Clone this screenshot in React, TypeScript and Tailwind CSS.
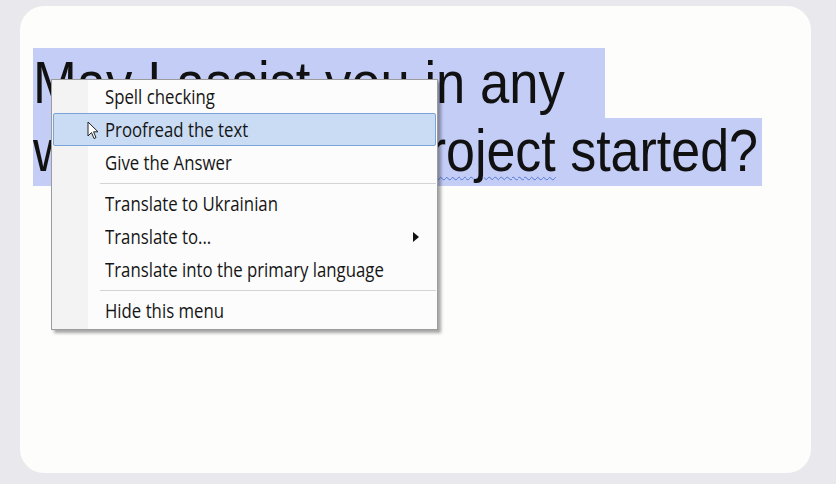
import React from "react";

// voci del menu contestuale
type MenuItem = { label: string; hot?: boolean; sub?: boolean } | "sep";

const items: MenuItem[] = [
  { label: "Spell checking" },
  { label: "Proofread the text", hot: true },
  { label: "Give the Answer" },
  "sep",
  { label: "Translate to Ukrainian" },
  { label: "Translate to...", sub: true },
  { label: "Translate into the primary language" },
  "sep",
  { label: "Hide this menu" },
];

function Cursor() {
  return (
    <svg width="12" height="19" viewBox="0 0 12 19" className="absolute left-[33px] top-[7px]">
      <path d="M1 1 L1 15 L4.5 11.5 L7 17.5 L9 16.6 L6.6 10.8 L11 10.8 Z" fill="#fff" stroke="#222" strokeWidth="1" strokeLinejoin="round" />
    </svg>
  );
}

function ContextMenu() {
  return (
    <div className="absolute left-[31px] top-[73px] w-[387px] border border-[#9c9c9c] bg-[#fcfcfc] pb-[2px] shadow-[3px_3px_3px_rgba(0,0,0,0.35)]">
      <div className="absolute left-0 top-0 bottom-0 w-[36px] bg-[#f3f3f3]" />
      {items.map((it, idx) =>
        it === "sep" ? (
          <div key={idx} className="relative flex h-[8px] items-center pl-[48px] pr-px">
            <div className="h-px flex-1 bg-[#d4d4d4]" />
          </div>
        ) : (
          <div
            key={idx}
            className={
              "relative mx-px flex h-[33px] items-center rounded-[2px] pl-[51px] pr-[16px] " +
              (it.hot ? "border border-[#7aa3d8] bg-[#c9dcf4]" : "border border-transparent")
            }
          >
            {it.hot && <Cursor />}
            <div className="flex-1 whitespace-nowrap">
              <span
                className="inline-block origin-left scale-x-[0.86] text-[19.5px] text-[#151515]"
                style={{ fontFamily: "'Open Sans', 'Noto Sans', sans-serif" }}
              >
                {it.label}
              </span>
            </div>
            {it.sub && (
              <svg width="6" height="10" viewBox="0 0 6 10">
                <path d="M0 0 L6 5 L0 10 Z" fill="#111" />
              </svg>
            )}
          </div>
        )
      )}
    </div>
  );
}

export default function App() {
  return (
    <div className="flex h-[484px] w-[836px] bg-[#e8e8ed] pb-[11px] pl-[20px] pr-[25px] pt-[6px]">
      <div className="relative flex-1 rounded-[24px] bg-[#fdfdfc] pl-[13px] pt-[42px]">
        <div
          className="text-[60px] leading-[70px] text-[#111]"
          style={{ fontFamily: "'Liberation Sans', Arial, sans-serif" }}
        >
          <div className="h-[70px] w-[572px] whitespace-nowrap bg-[#c4cdf6]">
            <span className="inline-block origin-left scale-x-[0.876]">May I assist you in any</span>
          </div>
          <div className="h-[68px] w-[729px] whitespace-nowrap bg-[#c4cdf6] leading-[66px]">
            <span className="inline-block origin-left scale-x-[0.866]">
              way to get your{" "}
              <span className="underline decoration-[#4f78d8] decoration-wavy decoration-1 underline-offset-[5px]">project</span>{" "}
              started?
            </span>
          </div>
        </div>
        <ContextMenu />
      </div>
    </div>
  );
}
